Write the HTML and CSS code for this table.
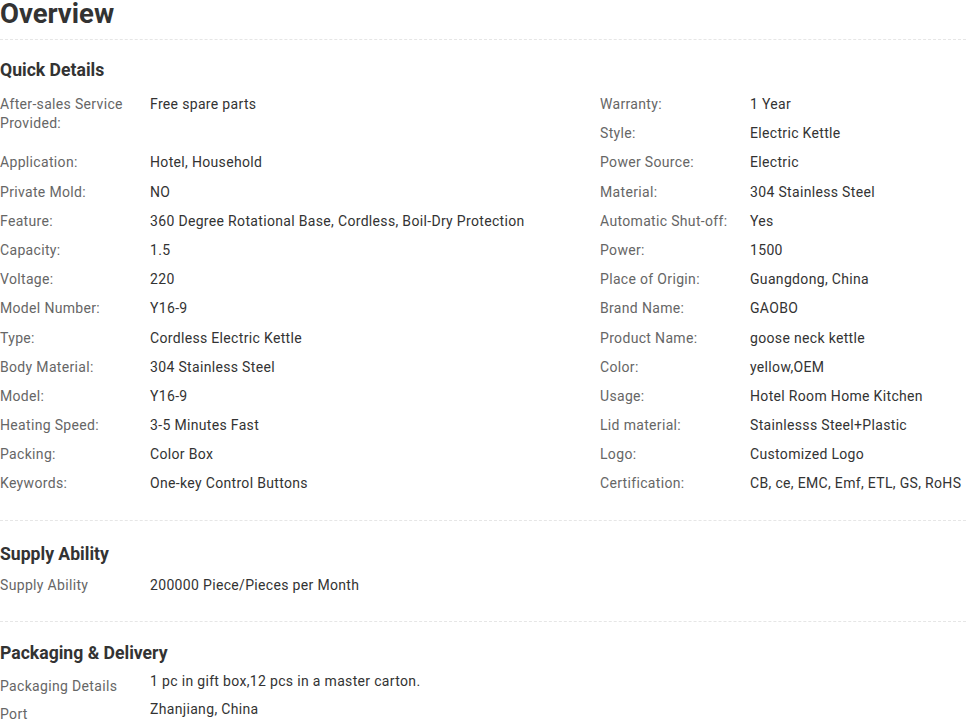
FILE: index.html
```html
<!DOCTYPE html>
<html lang="en">
<head>
<meta charset="utf-8">
<title>Overview</title>
<link rel="stylesheet" href="styles.css">
</head>
<body>
<div class="page">
  <h1 class="title">Overview</h1>

  <section class="section section-quick">
    <h2 class="section-title">Quick Details</h2>
    <div class="kv-grid">
      <div class="kv kv-tall"><span class="k">After-sales Service Provided:</span><span class="v">Free spare parts</span></div>
      <div class="kv"><span class="k">Warranty:</span><span class="v">1 Year</span></div>
      <div class="kv"><span class="k">Style:</span><span class="v">Electric Kettle</span></div>
      <div class="kv"><span class="k">Application:</span><span class="v">Hotel, Household</span></div>
      <div class="kv"><span class="k">Power Source:</span><span class="v">Electric</span></div>
      <div class="kv"><span class="k">Private Mold:</span><span class="v">NO</span></div>
      <div class="kv"><span class="k">Material:</span><span class="v">304 Stainless Steel</span></div>
      <div class="kv"><span class="k">Feature:</span><span class="v">360 Degree Rotational Base, Cordless, Boil-Dry Protection</span></div>
      <div class="kv"><span class="k">Automatic Shut-off:</span><span class="v">Yes</span></div>
      <div class="kv"><span class="k">Capacity:</span><span class="v">1.5</span></div>
      <div class="kv"><span class="k">Power:</span><span class="v">1500</span></div>
      <div class="kv"><span class="k">Voltage:</span><span class="v">220</span></div>
      <div class="kv"><span class="k">Place of Origin:</span><span class="v">Guangdong, China</span></div>
      <div class="kv"><span class="k">Model Number:</span><span class="v">Y16-9</span></div>
      <div class="kv"><span class="k">Brand Name:</span><span class="v">GAOBO</span></div>
      <div class="kv"><span class="k">Type:</span><span class="v">Cordless Electric Kettle</span></div>
      <div class="kv"><span class="k">Product Name:</span><span class="v">goose neck kettle</span></div>
      <div class="kv"><span class="k">Body Material:</span><span class="v">304 Stainless Steel</span></div>
      <div class="kv"><span class="k">Color:</span><span class="v">yellow,OEM</span></div>
      <div class="kv"><span class="k">Model:</span><span class="v">Y16-9</span></div>
      <div class="kv"><span class="k">Usage:</span><span class="v">Hotel Room Home Kitchen</span></div>
      <div class="kv"><span class="k">Heating Speed:</span><span class="v">3-5 Minutes Fast</span></div>
      <div class="kv"><span class="k">Lid material:</span><span class="v">Stainlesss Steel+Plastic</span></div>
      <div class="kv"><span class="k">Packing:</span><span class="v">Color Box</span></div>
      <div class="kv"><span class="k">Logo:</span><span class="v">Customized Logo</span></div>
      <div class="kv"><span class="k">Keywords:</span><span class="v">One-key Control Buttons</span></div>
      <div class="kv"><span class="k">Certification:</span><span class="v">CB, ce, EMC, Emf, ETL, GS, RoHS</span></div>
    </div>
  </section>

  <section class="section section-supply">
    <h2 class="section-title">Supply Ability</h2>
    <div class="kv"><span class="k">Supply Ability</span><span class="v">200000 Piece/Pieces per Month</span></div>
  </section>

  <section class="section section-pack">
    <h2 class="section-title">Packaging &amp; Delivery</h2>
    <div class="pk-row"><span class="pk-k">Packaging Details</span><span class="pk-v">1 pc in gift box,12 pcs in a master carton.</span></div>
    <div class="pk-row"><span class="pk-k">Port</span><span class="pk-v">Zhanjiang, China</span></div>
  </section>
</div>
</body>
</html>
```

FILE: styles.css
```css
html, body {
  margin: 0;
  padding: 0;
  background: #ffffff;
}

body {
  font-family: Roboto, "Liberation Sans", Arial, sans-serif;
  font-size: 14px;
  color: #333333;
}

.page {
  width: 966px;
}

.title {
  margin: 0;
  font-size: 27.5px;
  line-height: 28px;
  font-weight: 700;
  color: #333333;
  padding-bottom: 11px;
  border-bottom: 1px dashed #e6e6e6;
}

.section {
  border-bottom: 1px dashed #e6e6e6;
}

.section-title {
  margin: 0;
  font-size: 17.6px;
  line-height: 24px;
  font-weight: 700;
  color: #333333;
}

.section-quick {
  padding-top: 18px;
  padding-bottom: 21px;
}

.section-quick .section-title {
  margin-bottom: 8px;
}

.section-supply {
  padding-top: 21px;
  padding-bottom: 21px;
}

.section-supply .section-title {
  margin-bottom: 5px;
}

.section-pack {
  padding-top: 19px;
  border-bottom: none;
}

.section-pack .section-title {
  margin-bottom: 7px;
}

.kv-grid {
  display: grid;
  grid-template-columns: 600px 1fr;
  grid-auto-rows: 29.2px;
}

.kv {
  display: flex;
  padding: 5px 0;
  line-height: 19.2px;
  box-sizing: border-box;
  min-height: 29.2px;
  letter-spacing: 0.33px;
}

.kv-tall {
  grid-row: span 2;
}

.k {
  flex: 0 0 140px;
  padding-right: 10px;
  color: #666666;
}

.v {
  flex: 1 1 auto;
  color: #333333;
}

.pk-row {
  display: flex;
  line-height: 19.2px;
  padding-bottom: 4px;
  letter-spacing: 0.33px;
}

.pk-k {
  flex: 0 0 140px;
  padding-right: 10px;
  padding-top: 5px;
  color: #666666;
}

.pk-v {
  flex: 1 1 auto;
  color: #333333;
}
```
